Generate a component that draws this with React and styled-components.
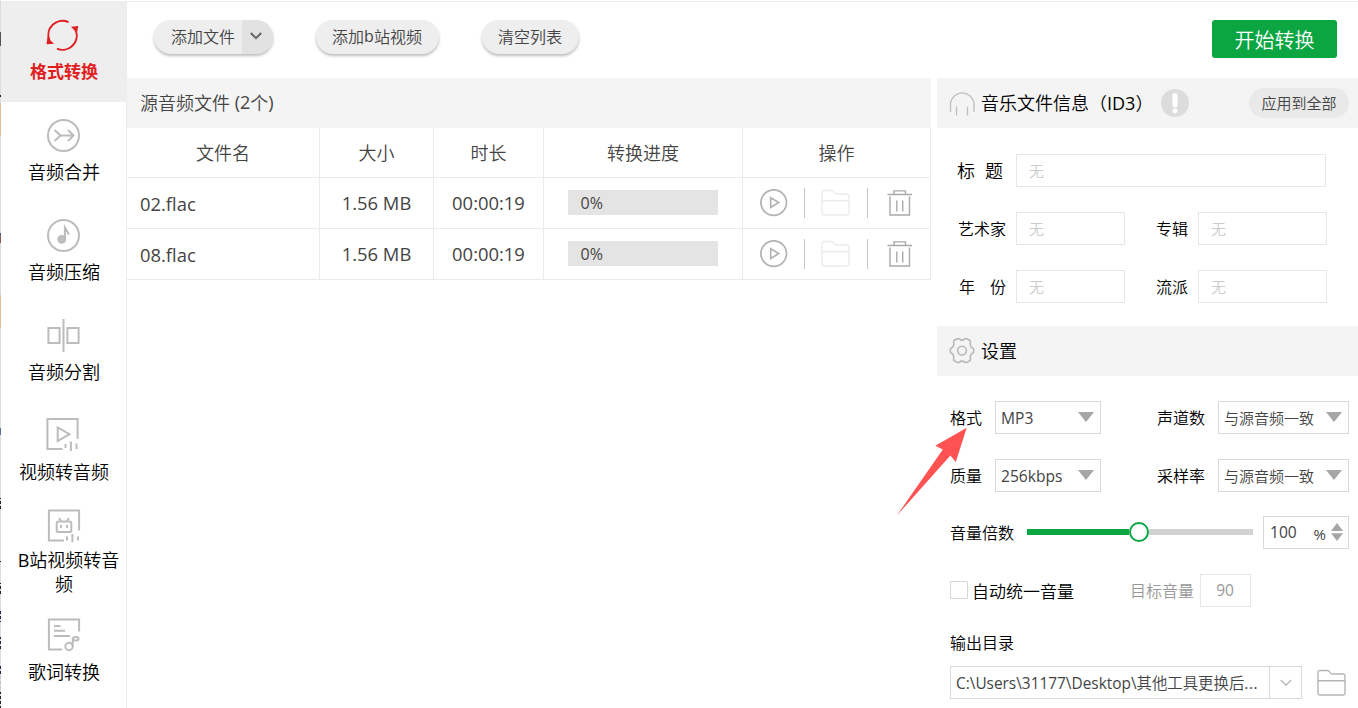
import React, { useState } from 'react';
import styled, { createGlobalStyle, css } from 'styled-components';

const GlobalStyle = createGlobalStyle`
    * {
        box-sizing: border-box;
    }

    body {
        margin: 0;
        overflow: hidden;
        background: #fff;
        font-family: "Open Sans", "Noto Sans CJK SC", sans-serif;
        font-weight: 350;
        color: #000;
    }

    button, input {
        font: inherit;
        border: none;
        padding: 0;
        margin: 0;
        background: none;
    }
`;

const tools = [
    { id: 'convert', label: '格式转换' },
    { id: 'merge', label: '音频合并' },
    { id: 'compress', label: '音频压缩' },
    { id: 'split', label: '音频分割' },
    { id: 'video', label: '视频转音频' },
    { id: 'bili', label: 'B站视频转音频' },
    { id: 'lyrics', label: '歌词转换' },
];

const files = [
    { name: '02.flac', size: '1.56 MB', time: '00:00:19', progress: 0 },
    { name: '08.flac', size: '1.56 MB', time: '00:00:19', progress: 0 },
];

function ToolIcon({ id }) {
    switch (id) {
        case 'convert':
            return (
                <ToolSvg viewBox="0 0 34 34" $active>
                    <path d="M22.5 3.7A14.2 14.2 0 0 0 3.4 22" />
                    <path d="M11 30.2A14.2 14.2 0 0 0 29.8 12" />
                    <path d="M25 8.3L32.3 7.6L30.9 14.6Z" fill="#e02020" stroke="none" />
                    <path d="M1.4 19L.5 25.7L8 25.3Z" fill="#e02020" stroke="none" />
                </ToolSvg>
            );
        case 'merge':
            return (
                <ToolSvg viewBox="0 0 34 34" $x=".5px">
                    <circle cx="17" cy="17" r="15.5" />
                    <path d="M8 11.5L14 17L8 22.5M14 17H27M21.5 11.5L27 17L21.5 22.5" />
                </ToolSvg>
            );
        case 'compress':
            return (
                <ToolSvg viewBox="0 0 34 34" $x=".5px">
                    <circle cx="17" cy="17" r="15.5" />
                    <circle cx="15.2" cy="20.8" r="3.4" fill="#bfbfbf" />
                    <path d="M18.4 21V9L22.4 16" />
                </ToolSvg>
            );
        case 'split':
            return (
                <ToolSvg viewBox="0 0 34 34" $x=".5px">
                    <path d="M1.9 9.5H13.1V24.5H1.9ZM20.9 9.5H32.1V24.5H20.9ZM17 .5V33.5" />
                </ToolSvg>
            );
        case 'video':
            return (
                <ToolSvg viewBox="0 0 34 34" $x="-.5px" $y="-1px">
                    <path d="M17 32.1H1.9V1.9H32.1V22M12.2 10.5V24L24 17.2ZM20 27V31M25.4 24.5V34M31 26.5V32" />
                </ToolSvg>
            );
        case 'bili':
            return (
                <ToolSvg viewBox="0 0 34 34" $x="1px">
                    <path d="M17 32.1H1.9V1.9H32.1V22M20 28V32M25.4 25.5V34M31 28V32" />
                    <rect x="9.7" y="13" width="14.6" height="10.5" rx="1.8" />
                    <path d="M14.2 12.5L12 9.7M19.8 12.5L22 9.7M14 16.5V19.5M20 16.5V19.5" />
                </ToolSvg>
            );
        default:
            return (
                <ToolSvg viewBox="0 0 34 34" $x="1px" $y="-.5px">
                    <path d="M15 32.1H1.9V1.9H32.1V14M7 8.5H13.5M7 13.3H18M7 18.5H23" />
                    <circle cx="22" cy="29" r="3.7" />
                    <path d="M25.7 29V21.8C25.7 19 31.6 18.5 31.6 21.2C31.6 23.6 28 23 26 22.5" />
                </ToolSvg>
            );
    }
}

const FolderIcon = ({ faint }) => (
    <svg width="30" height="28" viewBox="0 0 30 28" fill="none" stroke={faint ? '#ececec' : '#b5b5b5'} strokeWidth="1.4">
        <path d="M1 24V3.5Q1 1.5 3 1.5H10.5Q12 1.5 12.8 3L13.4 4Q14 5 15.5 5H26Q28 5 28 7V24Q28 26 26 26H3Q1 26 1 24ZM1 11.8H28" />
    </svg>
);

const PlayIcon = () => (
    <svg width="28" height="28" viewBox="0 0 28 28" fill="none" stroke="#b3b3b3" strokeWidth="1.7">
        <circle cx="13.7" cy="13.6" r="12.8" />
        <path d="M10.7 8.8V18.4L18.7 13.6Z" />
    </svg>
);

const TrashIcon = () => (
    <svg width="26" height="26" viewBox="0 0 26 26" fill="none" stroke="#a9a9a9" strokeWidth="1.4">
        <path d="M.5 4.5H25M7 4.5V.9H18.5V4.5M3 6.5V25H22.5V6.5M9.8 10.5V21.5M15.7 10.5V21.5" />
    </svg>
);

const HeadphoneIcon = () => (
    <svg width="26" height="26" viewBox="0 0 26 26" fill="none" stroke="#bebebe" strokeWidth="1.3">
        <path d="M1.5 22V12.5A12 12 0 0 1 25 12.5V22M7.5 16.5V25.5M18.5 16.5V25.5" />
    </svg>
);

const GearIcon = () => (
    <svg width="26" height="26" viewBox="0 0 26 26" fill="none" stroke="#b8b8b8" strokeWidth="1.6" strokeLinejoin="round">
        <path d="M8 .8H10.5L11.8 2.1H14.2L15.5 .8H18L21.3 2.8V6.8L22 8.8L24.6 10.8V14.4L22 16.4L21.3 18.4V22.4L18 24.4H15.5L14.2 23.1H11.8L10.5 24.4H8L4.7 22.4V18.4L4 16.4L1.4 14.4V10.8L4 8.8L4.7 6.8V2.8Z" />
        <circle cx="13" cy="12.6" r="4.4" />
    </svg>
);

const Chevron = ({ color, width }) => (
    <svg width="14" height="10" viewBox="0 0 14 10" fill="none" stroke={color} strokeWidth={width}>
        <path d="M1.8 2L7 7.2L12.2 2" />
    </svg>
);

function SelectField({ value, width, latin }) {
    return (
        <SelectBox $width={width} $latin={latin}>
            {value}
            <Caret />
        </SelectBox>
    );
}

function App() {
    const [active, setActive] = useState('convert');
    const [volume] = useState(100);

    return (
        <Page>
            <GlobalStyle />
            <Edge />
            <Sidebar>
                {tools.map((tool) => (
                    <ToolItem
                        key={tool.id}
                        $active={tool.id === active}
                        $kind={tool.id}
                        onClick={() => setActive(tool.id)}>
                        <ToolIcon id={tool.id} />
                        <ToolLabel $indent={tool.id === 'bili'}>{tool.label}</ToolLabel>
                    </ToolItem>
                ))}
            </Sidebar>
            <Content>
                <Toolbar>
                    <SplitPill>
                        <span>添加文件</span>
                        <PillArrow><Chevron color="#666" width="2" /></PillArrow>
                    </SplitPill>
                    <Pill $width="123px" $gap="43px">添加<Latin>b</Latin>站视频</Pill>
                    <Pill $width="97px" $gap="43px">清空列表</Pill>
                    <StartButton>开始转换</StartButton>
                </Toolbar>
                <Columns>
                    <FilePanel>
                        <FileTitle>源音频文件&nbsp;<Latin>(2</Latin>个<Latin>)</Latin></FileTitle>
                        <HeadRow>
                            <Cell>文件名</Cell>
                            <Cell>大小</Cell>
                            <Cell>时长</Cell>
                            <Cell>转换进度</Cell>
                            <Cell>操作</Cell>
                        </HeadRow>
                        {files.map((file) => (
                            <FileRow key={file.name}>
                                <Cell $left>{file.name}</Cell>
                                <Cell>{file.size}</Cell>
                                <Cell>{file.time}</Cell>
                                <Cell><Progress>{file.progress}%</Progress></Cell>
                                <ActionCell>
                                    <PlayIcon />
                                    <Divider />
                                    <FolderIcon faint />
                                    <Divider />
                                    <TrashIcon />
                                </ActionCell>
                            </FileRow>
                        ))}
                    </FilePanel>
                    <SidePanel>
                        <PanelTitle>
                            <HeadphoneIcon />
                            <PanelText>音乐文件信息（<Latin>ID3</Latin>）</PanelText>
                            <Hint>
                                <svg width="28" height="28" viewBox="0 0 28 28">
                                    <circle cx="14" cy="14" r="14" fill="#dcdcdc" />
                                    <path d="M14 6.5V16" stroke="#fff" strokeWidth="5" strokeLinecap="round" />
                                    <circle cx="14" cy="21.8" r="2.5" fill="#fff" />
                                </svg>
                            </Hint>
                            <ApplyButton>应用到全部</ApplyButton>
                        </PanelTitle>
                        <InfoForm>
                            <FieldRow>
                                <InfoLabel $size="18px" $spread="46px" $after="13px"><i>标</i><i>题</i></InfoLabel>
                                <TextInput $width="310px" placeholder="无" />
                            </FieldRow>
                            <FieldRow>
                                <InfoLabel $spread="48px" $after="10px">艺术家</InfoLabel>
                                <TextInput $width="109px" placeholder="无" />
                                <SecondLabel $width="73px">专辑</SecondLabel>
                                <TextInput $width="129px" placeholder="无" />
                            </FieldRow>
                            <FieldRow>
                                <InfoLabel $spread="47px" $after="10px"><i>年</i><i>份</i></InfoLabel>
                                <TextInput $width="109px" placeholder="无" />
                                <SecondLabel $width="73px">流派</SecondLabel>
                                <TextInput $width="129px" placeholder="无" />
                            </FieldRow>
                        </InfoForm>
                        <PanelTitle>
                            <GearIcon />
                            <PanelText>设置</PanelText>
                        </PanelTitle>
                        <SettingsForm>
                            <FieldRow>
                                <SetLabel $width="45px">格式</SetLabel>
                                <SelectField value="MP3" width="106px" latin />
                                <SecondLabel $width="117px" $gap="13px">声道数</SecondLabel>
                                <SelectField value="与源音频一致" width="131px" />
                            </FieldRow>
                            <FieldRow>
                                <SetLabel $width="45px">质量</SetLabel>
                                <SelectField value="256kbps" width="106px" latin />
                                <SecondLabel $width="117px" $gap="13px">采样率</SecondLabel>
                                <SelectField value="与源音频一致" width="131px" />
                            </FieldRow>
                            <FieldRow $lift>
                                <SetLabel $width="77px">音量倍数</SetLabel>
                                <Slider>
                                    <SliderFill style={{ width: `${volume / 2 - 5}%` }} />
                                    <Knob />
                                    <SliderRest />
                                </Slider>
                                <SpinBox>
                                    <span>{volume}</span>
                                    <Percent>%</Percent>
                                    <svg width="12" height="18" viewBox="0 0 12 18" fill="#a6a6a6">
                                        <path d="M0 8L6 0L12 8ZM0 10.3H12L6 18Z" />
                                    </svg>
                                </SpinBox>
                            </FieldRow>
                            <FieldRow>
                                <Checkbox />
                                <CheckLabel>自动统一音量</CheckLabel>
                                <TargetLabel>目标音量</TargetLabel>
                                <TargetBox>90</TargetBox>
                            </FieldRow>
                            <OutputLabel>输出目录</OutputLabel>
                            <FieldRow>
                                <PathBox>
                                    <PathText><Latin>C:\Users\31177\Desktop\</Latin>其他工具更换后<Dots>...</Dots></PathText>
                                    <PathToggle><Chevron color="#bbb" width="1.6" /></PathToggle>
                                </PathBox>
                                <FolderIcon />
                            </FieldRow>
                        </SettingsForm>
                    </SidePanel>
                </Columns>
            </Content>
            <Pointer width="72" height="90" viewBox="0 0 72 90">
                <path d="M70.7 .8L39.3 18.8L46.8 22.4L.8 88.6L54.4 28.6L59.8 35Z" fill="#ff5252" />
            </Pointer>
        </Page>
    );
}

const Page = styled.div`
    position: relative;
    display: flex;
    width: 1358px;
    height: 708px;
    overflow: hidden;
`;

/* strip of the window lying behind */
const Edge = styled.div`
    width: 1px;
    background:
        repeating-linear-gradient(transparent 0 3px, #dcdcdc 3px 5px) 0 436px / 1px 272px no-repeat,
        linear-gradient(
            #dcdcdc 32px, #555 32px 46px, #dcdcdc 46px 95px, #222 95px 97px,
            #dcdcdc 97px 103px, #ecb898 103px 136px,
            #dcdcdc 136px 233px, #44598c 233px 235px, #8a5a50 235px 243px,
            #dcdcdc 243px 295px, #ecb898 295px 328px, #dcdcdc 328px 428px,
            #5a6f9c 428px 435px, #dcdcdc 435px 498px, #222 498px 510px,
            #dcdcdc 510px 560px, #222 560px 562px, #dcdcdc 562px 583px,
            #222 583px 594px, #dcdcdc 594px 610px,
            #22264a 610px 622px, #dcdcdc 622px 637px, #22264a 637px 650px,
            #dcdcdc 650px 664px, #22264a 664px 676px, #c4c4c4 676px 692px, #222 692px
        );
`;

const Sidebar = styled.nav`
    display: flex;
    flex-direction: column;
    width: 126px;
    border-top: 1px solid #ececec;
    border-right: 1px solid #ececec;
    margin-top: 1px;
`;

const itemSpace = {
    bili: css`
        height: 108px;
        padding-top: 6px;
    `,
    lyrics: css`
        height: 92px;
        padding-top: 8px;
    `,
};

const ToolItem = styled.div`
    display: flex;
    flex-direction: column;
    align-items: center;
    height: 100px;
    padding-top: 16px;
    background: ${(props) => (props.$active ? '#eee' : '#fff')};
    color: ${(props) => (props.$active ? '#e02020' : '#000')};
    font-weight: ${(props) => (props.$active ? 700 : 'inherit')};
    font-size: ${(props) => (props.$active ? '17px' : '18px')};
    ${(props) => itemSpace[props.$kind]}
`;

const ToolSvg = styled.svg`
    width: 34px;
    height: 34px;
    fill: none;
    stroke: ${(props) => (props.$active ? '#e02020' : '#bcbcbc')};
    stroke-width: 2;
    flex: none;
    transform: translate(${(props) => props.$x || '0'}, ${(props) => props.$y || '.5px'});
    margin-right: 1px;
`;

const ToolLabel = styled.span`
    width: 112px;
    margin-top: ${(props) => (props.$indent ? '6px' : '8px')};
    padding-left: 1px;
    line-height: 24px;
    text-align: center;
    text-indent: ${(props) => (props.$indent ? '9px' : 0)};

    &::first-letter {
        font-weight: ${(props) => (props.$indent ? 400 : 'inherit')};
    }
`;

const Content = styled.div`
    flex: 1;
    margin-top: 1px;
    border-top: 1px solid #ececec;
`;

const Toolbar = styled.div`
    display: flex;
    align-items: flex-start;
    height: 76px;
    padding: 18px 21px 0 27px;
`;

const pill = css`
    display: flex;
    align-items: center;
    height: 34px;
    border-radius: 17px;
    background: #eee;
    color: #444;
    font-size: 16px;
    box-shadow: 0 2px 3px rgba(0, 0, 0, 0.26);
`;

const SplitPill = styled.button`
    ${pill}
    width: 119px;
    padding-left: 17px;
    overflow: hidden;

    & > span:first-child {
        padding-bottom: 2px;
    }
`;

const PillArrow = styled.span`
    display: flex;
    align-items: center;
    justify-content: center;
    width: 31px;
    height: 100%;
    margin-left: auto;
    padding: 0 4px 2px 0;
    background: #e2e2e2;
`;

const Pill = styled.button`
    ${pill}
    justify-content: center;
    padding: 0 1px 3px 0;
    width: ${(props) => props.$width};
    margin-left: ${(props) => props.$gap};
`;

const StartButton = styled.button`
    width: 125px;
    height: 38px;
    margin-left: auto;
    border-radius: 3px;
    background: #0ba542;
    color: #fff;
    font-size: 20px;
`;

const Columns = styled.div`
    display: flex;
    gap: 6px;
`;

const FilePanel = styled.section`
    width: 804px;
    color: #444;
    font-size: 18px;
`;

const FileTitle = styled.div`
    display: flex;
    align-items: center;
    height: 50px;
    padding: 0 0 2px 13px;
    background: #f4f4f4;
`;

const HeadRow = styled.div`
    display: grid;
    grid-template-columns: 193px 114px 110px 199px 188px;
    height: 50px;
    border-bottom: 1px solid #ebebeb;
`;

const Cell = styled.div`
    display: flex;
    align-items: center;
    justify-content: ${(props) => (props.$left ? 'flex-start' : 'center')};
    padding: ${(props) => (props.$left ? '0 0 0 13px' : '0 0 1px 0')};
    border-right: 1px solid #ebebeb;
`;

const FileRow = styled(HeadRow)`
    height: 51px;
    font-size: 18.4px;
    font-weight: 400;
`;

const ActionCell = styled(Cell)`
    justify-content: flex-start;
    padding: 0 0 1px 17px;

    & > svg:nth-child(3) {
        margin: 0 16px 0 16px;
    }

    & > svg:last-child {
        margin: 1px 0 0 19px;
    }
`;

const Divider = styled.i`
    width: 1px;
    height: 30px;
    margin-left: 16px;
    background: #c4c4c4;

    svg + & + svg + & {
        margin-left: 0;
    }
`;

const Progress = styled.div`
    width: 150px;
    height: 25px;
    margin-right: 1px;
    padding-left: 13px;
    background: #e4e4e4;
    font-size: 16px;
    line-height: 26px;
`;

const SidePanel = styled.section`
    flex: 1;
`;

const PanelTitle = styled.div`
    display: flex;
    align-items: center;
    height: 50px;
    padding: 0 9px 0 12px;
    background: #f4f4f4;
`;

const PanelText = styled.span`
    margin-left: 6px;
    padding-bottom: 2px;
    font-size: 18px;
    white-space: nowrap;
`;

const Latin = styled.span`
    font-weight: 400;
`;

const Dots = styled(Latin)`
    letter-spacing: .6px;
`;

const Hint = styled.span`
    display: flex;
    width: 28px;
    margin-left: 8px;
`;

const ApplyButton = styled.button`
    width: 100px;
    height: 30px;
    margin-left: auto;
    padding-bottom: 1px;
    border-radius: 15px;
    background: #e9e9e9;
    color: #444;
    font-size: 15px;
`;

const InfoForm = styled.div`
    display: flex;
    flex-direction: column;
    gap: 25px;
    height: 198px;
    padding: 26px 0 0 20px;
`;

const SettingsForm = styled.div`
    display: flex;
    flex-direction: column;
    gap: 25px;
    padding: 25px 0 0 13px;
`;

const FieldRow = styled.div`
    display: flex;
    align-items: center;
    height: 33px;
    margin-top: ${(props) => (props.$lift ? '-1px' : 0)};
    white-space: nowrap;
`;

const label = css`
    padding-bottom: 1px;
    font-size: 16px;
    flex: none;
`;

const InfoLabel = styled.label`
    ${label}
    display: flex;
    justify-content: space-between;
    width: ${(props) => props.$spread};
    margin-right: ${(props) => props.$after};
    font-size: ${(props) => props.$size};

    /* the label block is 59px wide whatever its text */
    margin-left: calc(59px - ${(props) => props.$spread} - ${(props) => props.$after});

    i {
        font-style: normal;
    }
`;

const SetLabel = styled.label`
    ${label}
    width: ${(props) => props.$width};
`;

const SecondLabel = styled.label`
    ${label}
    width: ${(props) => props.$width};
    padding-right: ${(props) => props.$gap || '10px'};
    text-align: right;
`;

const TextInput = styled.input`
    width: ${(props) => props.$width};
    height: 33px;
    padding: 0 12px;
    border: 1px solid #e6e6e6;
    background: #fff;
    font-size: 15px;

    &::placeholder {
        color: #ccc;
        opacity: 1;
    }
`;

const SelectBox = styled.div`
    display: flex;
    align-items: center;
    justify-content: space-between;
    width: ${(props) => props.$width};
    height: 33px;
    padding: 0 6px 0 5px;
    border: 1px solid #d9d9d9;
    color: #444;
    font-size: ${(props) => (props.$latin ? '15.6px' : '15px')};
    font-weight: ${(props) => (props.$latin ? 400 : 'inherit')};
`;

const Caret = styled.i`
    border: 8.5px solid transparent;
    border-top: 10px solid #a6a6a6;
    border-bottom: 0;
    margin-bottom: 1px;
`;

const Slider = styled.div`
    display: flex;
    align-items: center;
    width: 226px;
    margin-right: 10px;
    margin-bottom: 1px;
    padding-bottom: 1px;
`;

const SliderFill = styled.div`
    height: 6px;
    background: #0ba542;
`;

const Knob = styled.div`
    width: 20px;
    height: 20px;
    border: 2px solid #0ba542;
    border-radius: 50%;
    background: #fff;
    flex: none;
`;

const SliderRest = styled.div`
    flex: 1;
    height: 6px;
    background: #d2d2d2;
`;

const SpinBox = styled.div`
    display: flex;
    align-items: center;
    width: 86px;
    height: 33px;
    padding: 0 5px 1px 6px;
    border: 1px solid #d9d9d9;
    color: #444;
    font-size: 15.6px;
    font-weight: 400;
`;

const Percent = styled.span`
    margin: 3px 5px 0 auto;
    font-size: 15px;
`;

const Checkbox = styled.i`
    width: 18px;
    height: 18px;
    margin-bottom: 1px;
    border: 1px solid #d6d6d6;
    border-radius: 1px;
`;

const CheckLabel = styled.span`
    width: 162px;
    padding: 0 0 1px 4px;
    font-size: 17px;
`;

const TargetLabel = styled.span`
    width: 70px;
    padding-bottom: 1px;
    color: #999;
    font-size: 16px;
`;

const TargetBox = styled.div`
    width: 51px;
    height: 33px;
    padding-right: 1px;
    border: 1px solid #e6e6e6;
    color: #999;
    font-size: 15.5px;
    font-weight: 400;
    line-height: 31px;
    text-align: center;
`;

const OutputLabel = styled.div`
    height: 24px;
    margin: -1px 0 -14px;
    font-size: 16px;
    line-height: 24px;
`;

const PathBox = styled.div`
    display: flex;
    width: 352px;
    height: 33px;
    margin-right: 15px;
    border: 1px solid #d9d9d9;
    color: #444;
`;

const PathText = styled.span`
    flex: 1;
    padding-left: 5px;
    font-size: 15.4px;
    line-height: 33px;
`;

const PathToggle = styled.span`
    display: flex;
    align-items: center;
    justify-content: center;
    width: 32px;
    border-left: 1px solid #d9d9d9;
`;

const Pointer = styled.svg`
    position: absolute;
    left: 896px;
    top: 427px;
`;

export default App;
